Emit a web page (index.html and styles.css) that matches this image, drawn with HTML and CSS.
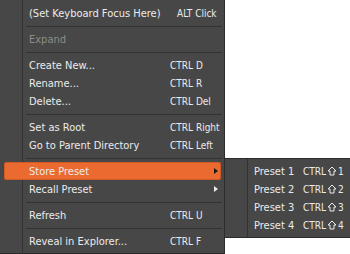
FILE: index.html
```html
<!DOCTYPE html>
<html lang="en">
<head>
  <meta charset="UTF-8">
  <title>Context Menu</title>
  <link rel="stylesheet" href="styles.css">
</head>
<body>
  <div class="menu main-menu">
    <div class="item"><span class="label">(Set Keyboard Focus Here)</span><span class="key key-alt">ALT Click</span></div>
    <div class="sep"></div>
    <div class="item disabled"><span class="label">Expand</span></div>
    <div class="sep"></div>
    <div class="item"><span class="label">Create New...</span><span class="key">CTRL D</span></div>
    <div class="item"><span class="label">Rename...</span><span class="key">CTRL R</span></div>
    <div class="item"><span class="label">Delete...</span><span class="key">CTRL Del</span></div>
    <div class="sep"></div>
    <div class="item"><span class="label">Set as Root</span><span class="key">CTRL Right</span></div>
    <div class="item"><span class="label">Go to Parent Directory</span><span class="key">CTRL Left</span></div>
    <div class="sep"></div>
    <div class="item active has-sub"><span class="label">Store Preset</span></div>
    <div class="item has-sub"><span class="label">Recall Preset</span></div>
    <div class="sep"></div>
    <div class="item"><span class="label">Refresh</span><span class="key">CTRL U</span></div>
    <div class="sep"></div>
    <div class="item"><span class="label">Reveal in Explorer...</span><span class="key">CTRL F</span></div>
  </div>

  <div class="menu sub-menu">
    <div class="item"><span class="label">Preset 1</span><span class="key">CTRL<svg class="shift" viewBox="0 0 10 10"><path d="M5 1 L9 5 L7 5 L7 9 L3 9 L3 5 L1 5 Z"/></svg> 1</span></div>
    <div class="item"><span class="label">Preset 2</span><span class="key">CTRL<svg class="shift" viewBox="0 0 10 10"><path d="M5 1 L9 5 L7 5 L7 9 L3 9 L3 5 L1 5 Z"/></svg> 2</span></div>
    <div class="item"><span class="label">Preset 3</span><span class="key">CTRL<svg class="shift" viewBox="0 0 10 10"><path d="M5 1 L9 5 L7 5 L7 9 L3 9 L3 5 L1 5 Z"/></svg> 3</span></div>
    <div class="item"><span class="label">Preset 4</span><span class="key">CTRL<svg class="shift" viewBox="0 0 10 10"><path d="M5 1 L9 5 L7 5 L7 9 L3 9 L3 5 L1 5 Z"/></svg> 4</span></div>
  </div>
</body>
</html>
```

FILE: styles.css
```css
:root {
  --bg: #474747;
  --border: #2b2b2b;
  --line: #333333;
  --text: #ebebeb;
  --muted: #8c8c8c;
  --accent: #ea6a30;
}
* { margin: 0; padding: 0; box-sizing: border-box; }
body {
  background: #ffffff;
  font-family: 'DejaVu Sans Condensed', 'DejaVu Sans', sans-serif;
  font-size: 11px;
  color: var(--text);
  width: 350px;
  height: 254px;
  overflow: hidden;
  position: relative;
}
.menu {
  background: var(--bg) linear-gradient(to right, transparent 22px, var(--line) 22px, var(--line) 23px, transparent 23px);
  border: 1px solid var(--border);
}
.main-menu { width: 225px; height: 254px; border-top: none; border-left: none; padding: 4px 0 3px; }
.sub-menu { position: absolute; left: 224px; top: 158px; width: 140px; padding: 3px 0; }
.item {
  display: grid;
  grid-template-columns: 141px auto;
  align-items: center;
  height: 18px;
  margin: 0 3px 0 4px;
  padding-left: 25px;
  white-space: nowrap;
  position: relative;
  border-radius: 3px;
}
.sub-menu .item { grid-template-columns: 49px auto; }
.item.disabled { color: var(--muted); }
.item.active { background: var(--accent); box-shadow: inset 0 0 0 1px #d05a26; }
.key { font-size: 10px; display: flex; align-items: center; }
.key-alt { margin-left: 7px; }
.shift { width: 10px; height: 10px; margin-left: 1px; margin-right: 1px; fill: none; stroke: var(--text); stroke-width: 1; }
.has-sub::after {
  content: '';
  position: absolute;
  right: 3px;
  top: 6px;
  border-left: 4px solid var(--text);
  border-top: 3px solid transparent;
  border-bottom: 3px solid transparent;
}
.item.active::after { border-left-color: #1a1a1a; }
.sep { height: 8px; margin: 0 2px 0 26px; position: relative; }
.sep::before { content: ''; position: absolute; left: 0; right: 0; top: 4px; height: 1px; background: var(--line); }
```
